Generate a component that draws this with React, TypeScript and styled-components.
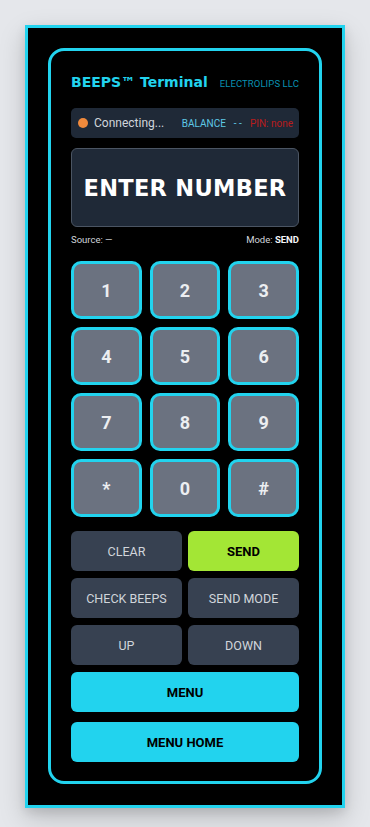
import React from "react";
import styled, { createGlobalStyle } from "styled-components";

const Global = createGlobalStyle`
  html, body { margin: 0; padding: 0; }
  body {
    background: #e5e7eb;
    font-family: "Roboto", "Liberation Sans", sans-serif;
  }
  * { box-sizing: border-box; }
`;

const Frame = styled.div`
  width: 320px;
  margin: 25px auto 19px;
  background: #000;
  border: 3px solid #22d3ee;
  padding: 20px 20px 21px;
  box-shadow: 0 10px 25px rgba(0, 0, 0, 0.18), 0 4px 10px rgba(0, 0, 0, 0.1);
`;

const Card = styled.div`
  border: 3px solid #22d3ee;
  border-radius: 16px;
  padding: 20px 20px 19px;
  display: flex;
  flex-direction: column;
`;

const Header = styled.div`
  display: flex;
  align-items: baseline;
  justify-content: space-between;
  margin-top: 3px;
  height: 24px;
`;

const Title = styled.div`
  color: #22d3ee;
  font-family: "DejaVu Sans", "Roboto", sans-serif;
  font-size: 14px;
  font-weight: 700;
`;

const Company = styled.div`
  color: #0891b2;
  font-size: 9.5px;
  letter-spacing: 0.1px;
`;

const StatusBar = styled.div`
  margin-top: 10px;
  height: 30px;
  background: #1f2937;
  border-radius: 5px;
  display: flex;
  align-items: center;
  padding: 0 6px 0 7px;
`;

const Dot = styled.span`
  width: 10px;
  height: 10px;
  border-radius: 50%;
  background: #f08a3c;
  flex: none;
`;

const StatusText = styled.span`
  color: #d1d5db;
  font-size: 12px;
  margin-left: 6px;
  flex: 1;
`;

const Small = styled.span<{ $color: string; $ml?: number }>`
  color: ${(p) => p.$color};
  font-size: 10px;
  margin-left: ${(p) => p.$ml ?? 0}px;
`;

const Display = styled.div`
  margin-top: 10px;
  height: 79px;
  background: #1f2937;
  border: 1px solid #4b5563;
  border-radius: 6px;
  display: flex;
  align-items: center;
  justify-content: center;
  color: #fff;
  font-family: "DejaVu Sans", "Roboto", sans-serif;
  font-size: 22.5px;
  font-weight: 700;
  letter-spacing: 0.3px;
`;

const InfoLine = styled.div`
  margin-top: 7px;
  display: flex;
  justify-content: space-between;
  font-size: 9.5px;
  color: #d1d5db;
  height: 12px;
`;

const Bold = styled.b`
  color: #f3f4f6;
`;

const Keypad = styled.div`
  margin-top: 15px;
  display: grid;
  grid-template-columns: repeat(3, 1fr);
  gap: 8px;
`;

const Key = styled.button`
  height: 58px;
  background: #6b7280;
  border: 3px solid #22d3ee;
  border-radius: 10px;
  color: #eceef1;
  font-family: inherit;
  font-size: 18px;
  font-weight: 700;
  padding: 0;
`;

const Controls = styled.div`
  margin-top: 14px;
  display: grid;
  grid-template-columns: 1fr 1fr;
  column-gap: 6px;
  row-gap: 7px;
`;

const Btn = styled.button<{ $variant?: "dark" | "green" | "cyan"; $wide?: boolean; $mt?: number }>`
  height: 40px;
  border: none;
  border-radius: 6px;
  font-family: inherit;
  font-size: ${(p) => (p.$variant ? "13px" : "12.5px")};
  padding: 0;
  grid-column: ${(p) => (p.$wide ? "1 / -1" : "auto")};
  margin-top: ${(p) => p.$mt ?? 0}px;
  background: ${(p) =>
    p.$variant === "green" ? "#a3e635" : p.$variant === "cyan" ? "#22d3ee" : "#374151"};
  color: ${(p) => (p.$variant ? "#000" : "#d1d5db")};
  font-weight: ${(p) => (p.$variant ? 700 : 400)};
`;

const keys = ["1", "2", "3", "4", "5", "6", "7", "8", "9", "*", "0", "#"];

export default function App() {
  return (
    <>
      <Global />
      <Frame>
        <Card>
          <Header>
            <Title>BEEPS™ Terminal</Title>
            <Company>ELECTROLIPS LLC</Company>
          </Header>
          <StatusBar>
            <Dot />
            <StatusText>Connecting...</StatusText>
            <Small $color="#5ec8e6">BALANCE</Small>
            <Small $color="#5ec8e6" $ml={8}>- -</Small>
            <Small $color="#b91c1c" $ml={8}>PIN: none</Small>
          </StatusBar>
          <Display>ENTER NUMBER</Display>
          <InfoLine>
            <span>Source: —</span>
            <span>
              Mode: <Bold>SEND</Bold>
            </span>
          </InfoLine>
          <Keypad>
            {keys.map((k) => (
              <Key key={k}>{k}</Key>
            ))}
          </Keypad>
          <Controls>
            <Btn>CLEAR</Btn>
            <Btn $variant="green">SEND</Btn>
            <Btn>CHECK BEEPS</Btn>
            <Btn>SEND MODE</Btn>
            <Btn>UP</Btn>
            <Btn>DOWN</Btn>
            <Btn $variant="cyan" $wide>MENU</Btn>
            <Btn $variant="cyan" $wide $mt={3}>MENU HOME</Btn>
          </Controls>
        </Card>
      </Frame>
    </>
  );
}
